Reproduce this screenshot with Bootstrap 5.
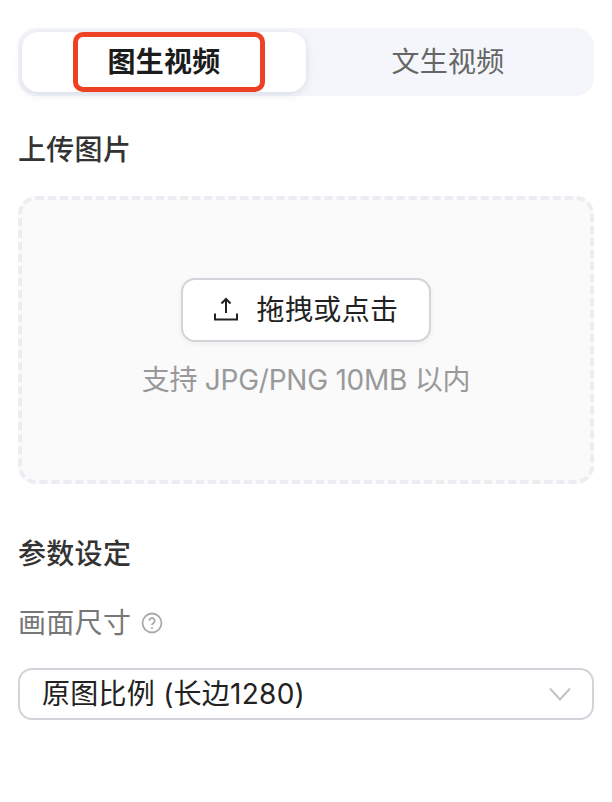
<!DOCTYPE html>
<html lang="zh">
<head>
<meta charset="utf-8">
<title>图生视频</title>
<link href="https://cdn.jsdelivr.net/npm/bootstrap@5.3.0/dist/css/bootstrap.min.css" rel="stylesheet">
<style>
html,body{height:802px;overflow:hidden;background:#fff}
body{font-family:"Inter","Noto Sans CJK SC",sans-serif;font-size:28px;line-height:40px;color:#222;padding:28px 18px 0}
.seg-bar{height:68px;background:#f4f6fb;border-radius:18px;padding:4px}
.seg-item{flex:1 1 0;height:60px;display:flex;align-items:center;justify-content:center;border-radius:16px;color:#666;letter-spacing:.3px}
.seg-active{position:relative;background:#fff;color:#1c1c1c;font-weight:700;box-shadow:0 2px 8px rgba(40,50,90,.14)}
.red-box{position:absolute;left:51px;top:0;width:192px;height:60px;border:5px solid #ee4023;border-radius:10px}
.sec-title{font-weight:500;color:#333;line-height:40px;letter-spacing:.3px}
.title-upload{margin:34px 0 26px}
.title-param{margin-top:50px}
.drop{height:288px;background:#fafafb;border-radius:18px;border:4px dashed #ecedf3;padding-top:78px}
.up-btn{width:250px;height:64px;background:#fff;border:2px solid #d3d3da;border-radius:14px;box-shadow:0 2px 6px rgba(0,0,0,.05);color:#222;gap:17px;font-size:28px;line-height:40px;padding:0;letter-spacing:.4px}
.hint{color:#999;margin-top:18px;letter-spacing:-.25px}
.lbl{color:#777;gap:10px;margin-top:29px;letter-spacing:.3px}
.sel{height:52px;border:2px solid #d3d3da;border-radius:14px;padding:0 21px 0 22px;color:#222;margin-top:25px;letter-spacing:.25px}
</style>
</head>
<body>
<div class="seg-bar d-flex">
  <div class="seg-item seg-active"><span class="red-box"></span>图生视频</div>
  <div class="seg-item">文生视频</div>
</div>
<div class="sec-title title-upload">上传图片</div>
<div class="drop d-flex flex-column align-items-center">
  <button type="button" class="btn up-btn d-flex align-items-center justify-content-center">
    <svg width="26" height="26" viewBox="0 0 26 26" fill="none" stroke="#222" stroke-width="2"><path d="M13 2v14M8.500 6.500 13 2l4.500 4.500M2 16.500v6h22v-6"/></svg>
    <span>拖拽或点击</span>
  </button>
  <div class="hint">支持 JPG/PNG 10MB 以内</div>
</div>
<div class="sec-title title-param">参数设定</div>
<div class="lbl d-flex align-items-center">
  <span>画面尺寸</span>
  <svg width="22" height="22" viewBox="0 0 22 22" fill="none"><circle cx="11" cy="11" r="9.500" stroke="#aaa" stroke-width="1.800"/><path d="M8.300 8.800a2.700 2.700 0 1 1 4.200 2.200c-1 .6-1.500 1-1.500 2.200" stroke="#aaa" stroke-width="1.800"/><circle cx="11" cy="16" r="1.100" fill="#aaa"/></svg>
</div>
<div class="sel d-flex align-items-center justify-content-between">
  <span>原图比例 (长边1280)</span>
  <svg width="22" height="14" viewBox="0 0 22 14" fill="none" stroke="#c4c4c8" stroke-width="2"><path d="M1 1.500 11 12.500 21 1.500"/></svg>
</div>
</body>
</html>
